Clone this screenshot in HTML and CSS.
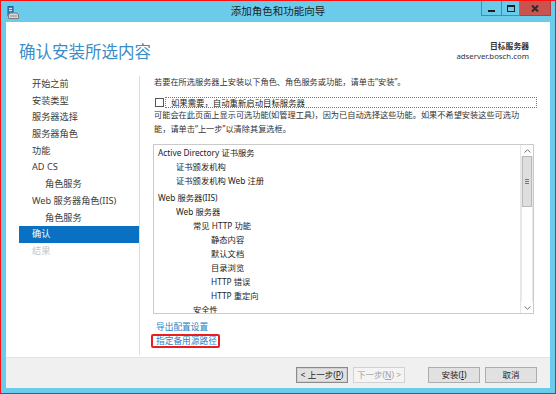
FILE: index.html
```html
<!DOCTYPE html>
<html lang="zh-CN">
<head>
    <meta charset="UTF-8">
    <title>添加角色和功能向导</title>
    <link rel="stylesheet" href="styles.css">
</head>
<body>
    <div class="window">
        <div class="titlebar">
            <svg class="app-icon" width="12" height="13" viewBox="0 0 12 13">
                <rect x="1" y="0.5" width="5" height="9" fill="#3b82c4" stroke="#1f5f99" stroke-width="1"/>
                <rect x="2" y="2" width="3" height="1" fill="#cfe6f7"/>
                <rect x="2" y="4" width="3" height="1" fill="#cfe6f7"/>
                <path d="M3 7 L10 7 L11.5 9 L11.5 12.5 L1.5 12.5 L1.5 9 Z" fill="#d9d9d9" stroke="#7a7a7a" stroke-width="1"/>
                <rect x="3" y="9.5" width="7" height="1" fill="#8a8a8a"/>
            </svg>
            <div class="title">添加角色和功能向导</div>
            <div class="controls">
                <div class="ctl ctl-min"><span class="min-glyph"></span></div>
                <div class="ctl ctl-max"><span class="max-glyph"></span></div>
                <div class="ctl ctl-close">
                    <svg width="8" height="7" viewBox="0 0 8 7">
                        <path d="M1 0.5 L7 6.5 M7 0.5 L1 6.5" stroke="#2b2b2b" stroke-width="2"/>
                    </svg>
                </div>
            </div>
        </div>

        <div class="client">
            <div class="header">
                <h1>确认安装所选内容</h1>
                <div class="server-info">
                    <div class="server-label">目标服务器</div>
                    <div>adserver.bosch.com</div>
                </div>
            </div>

            <div class="main">
                <div class="nav">
                    <div class="nav-item">开始之前</div>
                    <div class="nav-item">安装类型</div>
                    <div class="nav-item">服务器选择</div>
                    <div class="nav-item">服务器角色</div>
                    <div class="nav-item">功能</div>
                    <div class="nav-item">AD CS</div>
                    <div class="nav-item sub">角色服务</div>
                    <div class="nav-item">Web 服务器角色(IIS)</div>
                    <div class="nav-item sub">角色服务</div>
                    <div class="nav-item active">确认</div>
                    <div class="nav-item disabled">结果</div>
                </div>

                <div class="content">
                    <p class="intro">若要在所选服务器上安装以下角色、角色服务或功能，请单击“安装”。</p>

                    <div class="restart-row">
                        <span class="checkbox"></span>
                        <span class="restart-label">如果需要，自动重新启动目标服务器</span>
                    </div>

                    <p class="note">可能会在此页面上显示可选功能(如管理工具)，因为已自动选择这些功能。如果不希望安装这些可选功能，请单击“上一步”以清除其复选框。</p>

                    <div class="listbox">
                        <div class="list-items">
                            <div class="li">Active Directory 证书服务</div>
                            <div class="li lv1">证书颁发机构</div>
                            <div class="li lv1">证书颁发机构 Web 注册</div>
                            <div class="li group">Web 服务器(IIS)</div>
                            <div class="li lv1">Web 服务器</div>
                            <div class="li lv2">常见 HTTP 功能</div>
                            <div class="li lv3">静态内容</div>
                            <div class="li lv3">默认文档</div>
                            <div class="li lv3">目录浏览</div>
                            <div class="li lv3">HTTP 错误</div>
                            <div class="li lv3">HTTP 重定向</div>
                            <div class="li lv2">安全性</div>
                        </div>
                        <div class="scrollbar">
                            <div class="sb-arrow">
                                <svg width="7" height="4" viewBox="0 0 7 4"><path d="M0.5 3.5 L3.5 0.8 L6.5 3.5" fill="none" stroke="#777" stroke-width="1"/></svg>
                            </div>
                            <div class="sb-track">
                                <div class="sb-thumb"><span class="grip"></span></div>
                            </div>
                            <div class="sb-arrow">
                                <svg width="7" height="4" viewBox="0 0 7 4"><path d="M0.5 0.5 L3.5 3.2 L6.5 0.5" fill="none" stroke="#777" stroke-width="1"/></svg>
                            </div>
                        </div>
                    </div>

                    <div class="links">
                        <a class="link">导出配置设置</a>
                        <span class="marked"><a class="link">指定备用源路径</a></span>
                    </div>
                </div>
            </div>

            <div class="footer">
                <button class="btn focused">&lt; 上一步(<u>P</u>)</button>
                <button class="btn" disabled>下一步(<u>N</u>) &gt;</button>
                <button class="btn install">安装(<u>I</u>)</button>
                <button class="btn">取消</button>
            </div>
        </div>
    </div>
</body>
</html>
```

FILE: styles.css
```css
body {
    margin: 0;
    padding: 0;
    background-color: #ffffff;
    font-family: "Noto Sans", "Noto Sans CJK SC", sans-serif;
    color: #333;
}
.window {
    width: 556px;
    height: 394px;
    box-sizing: border-box;
    border: 1px solid #ff1010;
    background-color: #6bcbea;
    display: flex;
    flex-direction: column;
}
.titlebar {
    height: 21px;
    display: flex;
    align-items: flex-start;
    position: relative;
}
.app-icon {
    margin: 5px 0 0 6px;
}
.title {
    position: absolute;
    left: 0;
    right: 0;
    top: 3px;
    text-align: center;
    font-size: 10.5px;
    line-height: 14px;
    color: #1e1e1e;
}
.controls {
    margin-left: auto;
    margin-right: 4px;
    display: flex;
    position: relative;
}
.ctl {
    height: 15px;
    box-sizing: border-box;
    display: flex;
    align-items: center;
    justify-content: center;
    border: 1px solid #3f8fb0;
    border-top: none;
}
.ctl-min {
    width: 20px;
    border-right: none;
}
.ctl-max {
    width: 19px;
}
.ctl-close {
    width: 31px;
    background-color: #c9544f;
    border-color: #a8423e;
    border-left: none;
}
.min-glyph {
    width: 7px;
    height: 2px;
    background-color: #1e1e1e;
    margin-top: 5px;
}
.max-glyph {
    width: 6px;
    height: 4px;
    border: 1px solid #1e1e1e;
    border-top-width: 2px;
}
.client {
    flex: 1;
    margin: 0 5px 5px 5px;
    background-color: #ffffff;
    display: flex;
    flex-direction: column;
    min-height: 0;
}
.header {
    height: 48px;
    box-sizing: border-box;
    padding: 20px 21px 0 13px;
    display: flex;
    justify-content: space-between;
}
.header h1 {
    margin: 0;
    font-size: 16.5px;
    line-height: 20px;
    font-weight: normal;
    color: #3a8dc8;
}
.server-info {
    margin-top: -1px;
    text-align: right;
    font-size: 7.8px;
    line-height: 10px;
    color: #333;
}
.server-label {
    font-weight: bold;
}
.main {
    flex: 1;
    display: flex;
    min-height: 0;
}
.nav {
    width: 120px;
    margin: 6px 0 2px 13px;
    border-right: 1px solid #dcdcdc;
}
.nav-item {
    height: 16.7px;
    line-height: 16.7px;
    padding-left: 13px;
    font-size: 9.2px;
    color: #3c3c3c;
    white-space: nowrap;
}
.nav-item.sub {
    padding-left: 26px;
}
.nav-item.active {
    background-color: #0a70c2;
    color: #ffffff;
}
.nav-item.disabled {
    color: #c4c4c4;
}
.content {
    flex: 1;
    padding: 6px 13px 0 14px;
    font-size: 8.2px;
    color: #333;
}
.intro {
    margin: 0;
    line-height: 12px;
}
.restart-row {
    margin-top: 9px;
    height: 11px;
    display: flex;
    align-items: center;
}
.checkbox {
    width: 9px;
    height: 9px;
    box-sizing: border-box;
    border: 1px solid #555;
    margin-left: 1px;
    background-color: #fff;
}
.restart-label {
    flex: 1;
    height: 11px;
    box-sizing: border-box;
    margin-left: 1px;
    border: 1px dotted #777;
    padding-left: 5px;
    line-height: 9px;
    font-size: 8.4px;
    color: #222;
}
.note {
    margin: 0;
    line-height: 14px;
    padding-right: 6px;
}
.listbox {
    margin: 8px 3px 0 -1px;
    height: 170px;
    box-sizing: border-box;
    border: 1px solid #cacaca;
    display: flex;
}
.list-items {
    flex: 1;
    overflow: hidden;
    padding: 1px 0 0 4px;
    font-size: 8.3px;
    color: #222;
}
.li {
    line-height: 14px;
    white-space: nowrap;
}
.li.group {
    margin-top: 3px;
}
.li.lv1 {
    padding-left: 18px;
}
.li.lv2 {
    padding-left: 35px;
}
.li.lv3 {
    padding-left: 53px;
}
.scrollbar {
    width: 12px;
    display: flex;
    flex-direction: column;
    border-left: 1px solid #e6e6e6;
    background-color: #ffffff;
}
.sb-arrow {
    height: 11px;
    display: flex;
    align-items: center;
    justify-content: center;
}
.sb-track {
    flex: 1;
    border-left: 1px solid #e8e8e8;
    border-right: 1px solid #e8e8e8;
}
.sb-thumb {
    height: 51px;
    box-sizing: border-box;
    border: 1px solid #b9b9b9;
    background-color: #dedede;
    display: flex;
    align-items: center;
    justify-content: center;
}
.grip {
    width: 4px;
    height: 5px;
    background: repeating-linear-gradient(#777 0 1px, transparent 1px 2px);
}
.links {
    margin-top: 7px;
    display: flex;
    flex-direction: column;
    align-items: flex-start;
    font-size: 8.7px;
}
.link {
    color: #2a7fc4;
    line-height: 13px;
    margin-left: 2px;
    cursor: pointer;
}
.marked {
    margin-left: -3px;
    border: 2px solid #ee1c1c;
    border-radius: 2px;
    padding: 0 1px 0 3px;
    line-height: 10px;
}
.marked .link {
    margin-left: 0;
    line-height: 10px;
}
.footer {
    height: 31px;
    box-sizing: border-box;
    border-top: 1px solid #e2e2e2;
    background-color: #f0f0f0;
    padding: 9px 13px 0 0;
    display: flex;
    justify-content: flex-end;
    align-items: flex-start;
    gap: 5px;
}
.btn {
    width: 52px;
    height: 16px;
    box-sizing: border-box;
    padding: 0;
    border: 1px solid #adadad;
    background-color: #e1e1e1;
    font-family: "Noto Sans", "Noto Sans CJK SC", sans-serif;
    font-size: 8.5px;
    line-height: 14px;
    color: #222;
}
.btn.focused {
    border-color: #8a8a8a;
    box-shadow: inset 0 0 0 1px #d0d0d0;
}
.btn:disabled {
    background-color: #f4f4f4;
    border-color: #d2d2d2;
    color: #a3a3a3;
}
.btn.install {
    margin-left: 18px;
}
```
